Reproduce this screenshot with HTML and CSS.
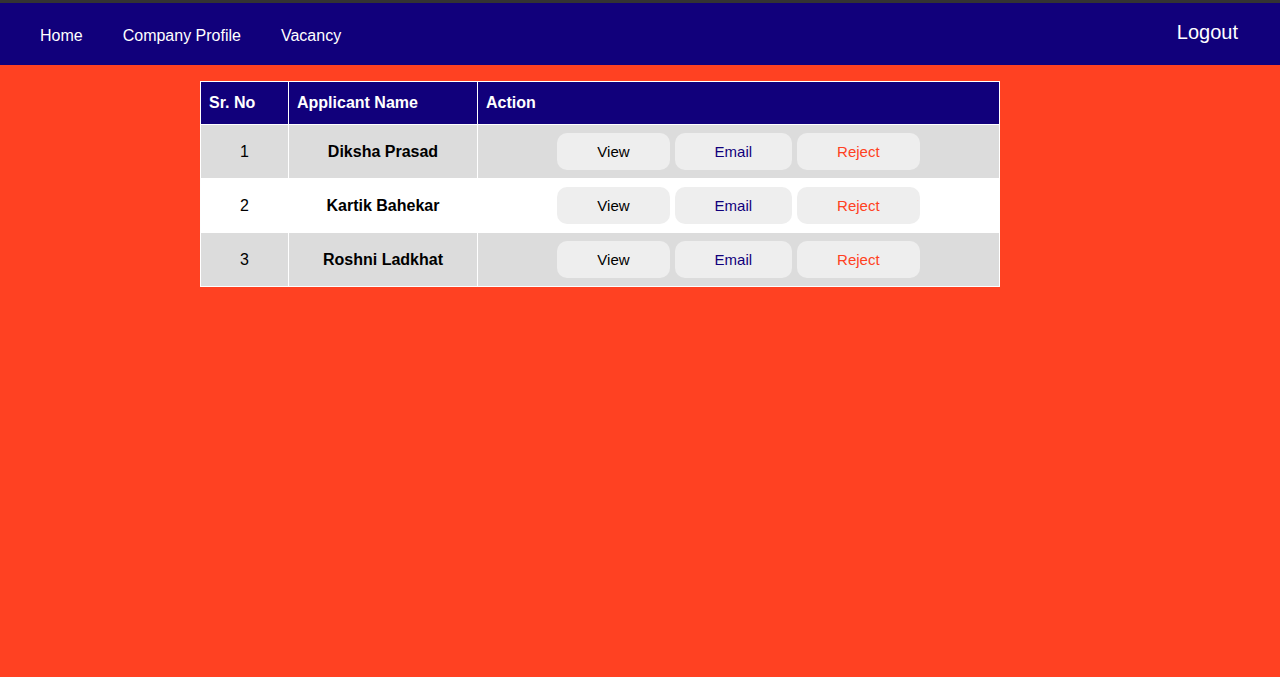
FILE: index.html
```html
<!DOCTYPE html>
<html>
<head>
<meta charset="utf-8">
<link rel="stylesheet" href="styles.css">
</head>
<body>
<div class="topline"></div>
<nav class="nav">
  <ul class="nav-links">
    <li><a href="#">Home</a></li>
    <li><a href="#">Company Profile</a></li>
    <li><a href="#">Vacancy</a></li>
  </ul>
  <a class="logout" href="#">Logout</a>
</nav>
<main class="main">
  <table class="applicants">
    <thead>
      <tr><th class="c-no">Sr. No</th><th class="c-name">Applicant Name</th><th class="c-action">Action</th></tr>
    </thead>
    <tbody>
      <tr class="odd"><td class="no">1</td><td class="name">Diksha Prasad</td><td class="actions"><button class="btn view">View</button><button class="btn email">Email</button><button class="btn reject">Reject</button></td></tr>
      <tr class="even"><td class="no">2</td><td class="name">Kartik Bahekar</td><td class="actions"><button class="btn view">View</button><button class="btn email">Email</button><button class="btn reject">Reject</button></td></tr>
      <tr class="odd"><td class="no">3</td><td class="name">Roshni Ladkhat</td><td class="actions"><button class="btn view">View</button><button class="btn email">Email</button><button class="btn reject">Reject</button></td></tr>
    </tbody>
  </table>
</main>
</body>
</html>
```
FILE: styles.css
```css
html, body {
  margin: 0;
  padding: 0;
}
body {
  background: #ff4122;
  font-family: "Liberation Sans", Arial, Helvetica, sans-serif;
  min-height: 677px;
}
.topline {
  height: 3px;
  background: #333333;
}
.nav {
  height: 62px;
  background: #11007b;
  display: flex;
  align-items: center;
  justify-content: space-between;
  padding: 0 42px 0 20px;
}
.nav-links {
  list-style: none;
  margin: 0;
  padding: 0;
  display: flex;
  align-items: center;
  padding-top: 4px;
}
.nav-links a {
  display: block;
  color: #fff;
  text-decoration: none;
  font-size: 16px;
  padding: 0 20px;
}
.logout {
  color: #fff;
  text-decoration: none;
  font-size: 20px;
  margin-top: -4px;
}
.main {
  padding: 16px 0 0 200px;
}
.applicants {
  width: 800px;
  border-collapse: collapse;
  border: 1px solid #fff;
  font-size: 16px;
}
.applicants th {
  background: #11007b;
  color: #fff;
  font-weight: bold;
  text-align: left;
  height: 43px;
  padding: 0 8px;
  border: 1px solid #fff;
  box-sizing: border-box;
}
.c-no { width: 88px; }
.c-name { width: 189px; }
.applicants td {
  height: 53px;
  padding: 0;
  border: 1px solid #fff;
  text-align: center;
  color: #000;
}
.odd td { background: #dcdcdc; }
.even td { background: #fff; }
.name { font-weight: bold; }
.actions {
  font-size: 0;
}
.btn {
  font-family: "Liberation Sans", Arial, Helvetica, sans-serif;
  font-size: 15px;
  height: 37px;
  padding: 0 40px;
  border: none;
  border-radius: 10px;
  background: #eeeeee;
  margin: 0 2.5px;
  vertical-align: middle;
}
.view { color: #000; }
.email { color: #11007b; }
.reject { color: #ff4122; }
```
